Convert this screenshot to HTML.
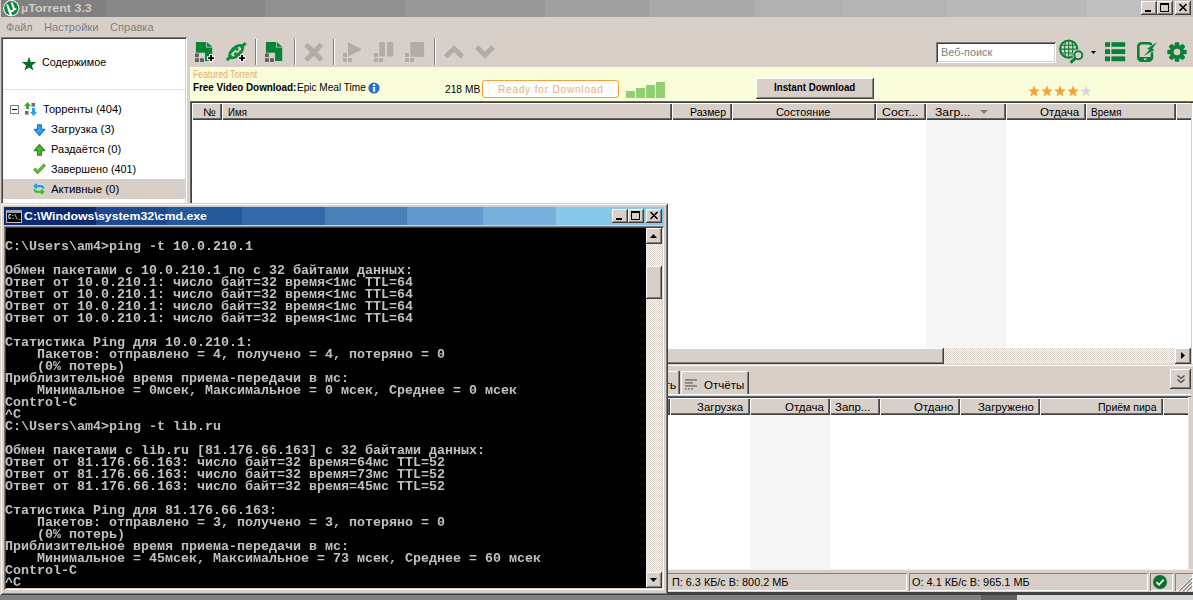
<!DOCTYPE html>
<html lang="ru"><head><meta charset="utf-8"><title>µTorrent 3.3</title>
<style>
*{box-sizing:border-box;margin:0;padding:0}
html,body{width:1193px;height:600px;overflow:hidden;background:#d8d0c8;}
body{position:relative;font-family:"Liberation Sans",sans-serif;font-size:11px;color:#000;line-height:13px}
.a{position:absolute}
.t{position:absolute;white-space:nowrap;line-height:13px;height:13px;transform-origin:0 0}
.face{background:#d8d0c8}
.btn{position:absolute;background:#d8d0c8;box-shadow:inset -1px -1px #404040,inset 1px 1px #fff,inset -2px -2px #808080}
.sunk{position:absolute;box-shadow:inset 1px 1px #808080,inset -1px -1px #fff,inset 2px 2px #404040,inset -2px -2px #d8d0c8}
.pane{position:absolute;box-shadow:inset 1px 1px #808080,inset -1px -1px #fff}
.hl{box-shadow:inset 1px 1px #fff,inset 0 -1px #404040,inset 0 -2px #686868 !important}
.hc{position:absolute;background:#d8d0c8;box-shadow:inset 1px 1px #fff,inset -1px -1px #404040,inset -2px -2px #686868;white-space:nowrap;overflow:hidden;line-height:13px;padding-top:2px}
.dith{background-image:conic-gradient(#fff 25%,#d8d0c8 0 50%,#fff 0 75%,#d8d0c8 0);background-size:2px 2px}
.sep{position:absolute;top:39px;width:2px;height:26px;border-left:1px solid #808080;border-right:1px solid #fff}
svg{position:absolute;overflow:visible}
#cmdtxt{position:absolute;left:5px;top:229px;width:640px;height:359px;font-family:"Liberation Mono",monospace;font-weight:bold;font-size:13.333px;line-height:12px;color:#c0c0c0;white-space:pre;overflow:hidden;will-change:transform}
</style></head><body>

<!-- ===== uTorrent window ===== -->
<div class="a" style="left:1px;top:0;width:1192px;height:17px;background:linear-gradient(90deg,rgb(128,128,128) 0px,rgb(128,128,128) 105px,rgb(136,136,136) 105px,rgb(136,136,136) 264px,rgb(144,144,144) 264px,rgb(144,144,144) 404px,rgb(152,152,152) 404px,rgb(152,152,152) 544px,rgb(160,160,160) 544px,rgb(160,160,160) 649px,rgb(169,169,169) 649px,rgb(169,169,169) 754px,rgb(176,176,176) 754px,rgb(176,176,176) 841px,rgb(180,180,180) 841px,rgb(180,180,180) 946px,rgb(185,185,185) 946px,rgb(185,185,185) 1086px,rgb(192,192,192) 1086px,rgb(192,192,192) 1191px)"></div>
<svg style="left:3px;top:0" width="17" height="17" viewBox="0 0 17 17"><circle cx="8.3" cy="8.2" r="8.1" fill="#fff"/><circle cx="8.3" cy="8.2" r="7.1" fill="#0a8a3a"/><g transform="rotate(-20 8.3 8.2)" fill="none" stroke="#fff"><path d="M5.6 3.2 V9 Q5.6 11.2 8 11.2 Q10.6 11.2 10.6 8.6 V3" stroke-width="2"/><path d="M5.6 8 V15.2" stroke-width="2.2"/><path d="M10.6 8.6 Q10.8 10.8 12.8 10.4" stroke-width="1.6"/></g></svg>
<div class="t f" style="left:20.6px;top:2px;font-size:11px;color:#d0ccc4;font-weight:bold;transform:scaleX(1.1351);">µTorrent 3.3</div>
<!-- title buttons -->
<div class="btn" style="left:1141px;top:1px;width:16px;height:14px"><div class="a" style="left:4px;top:9px;width:6px;height:2px;background:#000"></div></div>
<div class="btn" style="left:1157px;top:1px;width:16px;height:14px"><div class="a" style="left:3px;top:2px;width:9px;height:9px;border:1px solid #000;border-top-width:2px"></div></div>
<div class="btn" style="left:1175px;top:1px;width:16px;height:14px"><svg style="left:4px;top:3px" width="8" height="7" viewBox="0 0 8 7"><path d="M0.5 0 L7.5 7 M7.5 0 L0.5 7" stroke="#000" stroke-width="1.6"/></svg></div>

<!-- menu -->
<div class="t f" style="left:6.3px;top:21px;font-size:11px;color:#808080;transform:scaleX(0.9761);">Файл</div>
<div class="t f" style="left:44.0px;top:21px;font-size:11px;color:#808080;transform:scaleX(1.0086);">Настройки</div>
<div class="t f" style="left:110.2px;top:21px;font-size:11px;color:#808080;transform:scaleX(1.0103);">Справка</div>

<!-- sidebar -->
<div class="sunk" style="left:1px;top:37px;width:186px;height:180px;background:#fff"></div>
<svg style="left:21.2px;top:55.6px" width="16" height="16" viewBox="0 0 15 15"><path d="M7.5 0.8 L9.2 5.6 L14.3 5.7 L10.2 8.8 L11.7 13.7 L7.5 10.8 L3.3 13.7 L4.8 8.8 L0.7 5.7 L5.8 5.6 Z" fill="#0b6b2e"/></svg>
<div class="t f" style="left:42.3px;top:56px;font-size:11px;color:#000;transform:scaleX(0.9744);">Содержимое</div>
<div class="a" style="left:3px;top:89px;width:182px;height:1px;background:#e0e0e0"></div>
<div class="a" style="left:3px;top:179px;width:182px;height:20px;background:#d8d0c8"></div>
<!-- tree -->
<div class="a" style="left:10px;top:105px;width:9px;height:9px;border:1px solid #808080;background:#fff"><div class="a" style="left:1px;top:3px;width:5px;height:1px;background:#000"></div></div>
<svg style="left:24px;top:102px" width="13" height="14" viewBox="0 0 13 14">
 <path d="M3.5 0 L7 4 L5 4 L5 7 L2 7 L2 4 L0 4 Z" fill="#3aa83a"/>
 <rect x="7.5" y="1" width="3.6" height="3.6" fill="#707070"/><rect x="1" y="9" width="3.6" height="3.6" fill="#707070"/>
 <path d="M9.5 14 L6 10 L8 10 L8 6 L11 6 L11 10 L13 10 Z" fill="#2a9df4"/>
</svg>
<div class="t f" style="left:42.6px;top:103px;font-size:11px;color:#000;transform:scaleX(1.0090);">Торренты (404)</div>
<svg style="left:33px;top:124px" width="13" height="12" viewBox="0 0 13 12"><path d="M4.6 0.8 L8.4 0.8 L8.4 5.4 L11.8 5.4 L6.5 11.2 L1.2 5.4 L4.6 5.4 Z" fill="#38a4f4" stroke="#1878d0" stroke-width="1.3" stroke-linejoin="round"/></svg>
<div class="t f" style="left:51.2px;top:123px;font-size:11px;color:#000;transform:scaleX(1.0429);">Загрузка (3)</div>
<svg style="left:33px;top:144px" width="13" height="12" viewBox="0 0 13 12"><path d="M4.6 11.2 L8.4 11.2 L8.4 6.6 L11.8 6.6 L6.5 0.8 L1.2 6.6 L4.6 6.6 Z" fill="#50b830" stroke="#2c8a18" stroke-width="1.3" stroke-linejoin="round"/></svg>
<div class="t f" style="left:51.2px;top:143px;font-size:11px;color:#000;transform:scaleX(1.0130);">Раздаётся (0)</div>
<svg style="left:33px;top:163px" width="13" height="11" viewBox="0 0 13 11"><path d="M1.2 5.6 L4.6 9 L11.8 1.6" fill="none" stroke="#3c9a20" stroke-width="3"/><path d="M1.4 5.6 L4.6 8.6 L11.6 1.8" fill="none" stroke="#6cc83c" stroke-width="1.4"/></svg>
<div class="t f" style="left:51.2px;top:163px;font-size:11px;color:#000;transform:scaleX(0.9839);">Завершено (401)</div>
<svg style="left:32px;top:182px" width="14" height="14" viewBox="0 0 14 14">
 <path d="M5.2 0.6 L0.8 4.2 L5.2 7.8 L5.2 5.6 L9 5.6 Q10.6 5.8 10.8 7.6 L12.6 7.6 Q12.8 3.2 9 2.8 L5.2 2.8 Z" fill="#2a9df4" stroke="#fff" stroke-width="0.9" paint-order="stroke"/>
 <path d="M8.8 13.4 L13.2 9.8 L8.8 6.2 L8.8 8.4 L5 8.4 Q3.4 8.2 3.2 6.6 L1.4 6.6 Q1.2 10.8 5 11.2 L8.8 11.2 Z" fill="#4cb830" stroke="#fff" stroke-width="0.9" paint-order="stroke"/>
</svg>
<div class="t f" style="left:51.2px;top:183px;font-size:11px;color:#000;transform:scaleX(1.0348);">Активные (0)</div>

<!-- toolbar icons -->
<svg style="left:195px;top:42px" width="20" height="20" viewBox="0 0 20 20">
 <path d="M0.9 0 L10.9 0 L10.9 5.4 L17.2 5.4 L17.2 19.1 L10.1 19.1 L10.1 10.8 L0.9 10.8 Z" fill="#068434"/><path d="M11.7 0 L17.2 4.8 L11.7 4.8 Z" fill="#068434"/>
 <rect x="0" y="11.4" width="3.9" height="3.8" fill="#606060"/><rect x="0" y="16.2" width="3.9" height="3.8" fill="#606060"/><rect x="5" y="16.2" width="3.9" height="3.8" fill="#606060"/>
 <path d="M16 12.2 V20 M12.1 16.1 H19.9" stroke="#fff" stroke-width="3.8"/><path d="M16 13.1 V19.1 M13 16.1 H19" stroke="#000" stroke-width="1.9"/>
</svg>
<svg style="left:226px;top:42px" width="20" height="20" viewBox="0 0 20 20">
 <g transform="rotate(-42 10.2 9.6)">
  <rect x="-2.6" y="8.2" width="25.6" height="2.9" fill="#0a8a3c"/>
  <ellipse cx="10.2" cy="9.6" rx="9.4" ry="5.6" fill="#0a8a3c"/>
  <rect x="4.2" y="7.7" width="12" height="3.8" rx="1.4" fill="#d8d0c8"/>
  <rect x="11" y="7.4" width="2.6" height="2.3" fill="#0a8a3c"/><rect x="6.8" y="9.5" width="2.6" height="2.3" fill="#0a8a3c"/>
 </g>
 <path d="M16 12.2 V20 M12.1 16.1 H19.9" stroke="#fff" stroke-width="3.8"/><path d="M16 13.1 V19.1 M13 16.1 H19" stroke="#000" stroke-width="1.9"/>
</svg>
<div class="sep" style="left:255px"></div>
<svg style="left:265px;top:42px" width="20" height="20" viewBox="0 0 20 20">
 <path d="M0.9 0 L10.9 0 L10.9 5.4 L17.2 5.4 L17.2 19.1 L10.1 19.1 L10.1 10.8 L0.9 10.8 Z" fill="#068434"/><path d="M11.7 0 L17.2 4.8 L11.7 4.8 Z" fill="#068434"/>
 <rect x="0" y="11.4" width="3.9" height="3.8" fill="#606060"/><rect x="0" y="16.2" width="3.9" height="3.8" fill="#606060"/><rect x="5" y="16.2" width="3.9" height="3.8" fill="#606060"/>
</svg>
<div class="sep" style="left:294px"></div>
<svg style="left:304px;top:42px" width="20" height="20" viewBox="0 0 20 20"><path d="M2 2.5 L17.5 18 M17.5 2.5 L2 18" stroke="#b0aca8" stroke-width="5.2"/></svg>
<div class="sep" style="left:333px"></div>
<svg style="left:343px;top:42px" width="20" height="20" viewBox="0 0 20 20" fill="#b0aca8">
 <path d="M5 0 L19 7.5 L5 14.5 Z"/><rect x="0" y="11" width="4" height="4"/><rect x="0" y="16" width="4" height="4"/><rect x="5" y="16" width="4" height="4"/></svg>
<svg style="left:374px;top:42px" width="20" height="20" viewBox="0 0 20 20" fill="#b0aca8">
 <rect x="5.3" y="0" width="5.6" height="14.5"/><rect x="13" y="0" width="6.2" height="14.5"/><rect x="0" y="11" width="4" height="4"/><rect x="0" y="16" width="4" height="4"/><rect x="5" y="16" width="4" height="4"/></svg>
<svg style="left:405px;top:42px" width="20" height="20" viewBox="0 0 20 20" fill="#b0aca8">
 <rect x="5.3" y="0" width="13.8" height="14.8"/><rect x="0" y="11" width="4" height="4"/><rect x="0" y="16" width="4" height="4"/><rect x="5" y="16" width="4" height="4"/></svg>
<div class="sep" style="left:434px"></div>
<svg style="left:444px;top:45px" width="20" height="14" viewBox="0 0 20 14"><path d="M10 0 L20 10 L16.5 13.6 L10 7 L3.5 13.6 L0 10 Z" fill="#b0aca8"/></svg>
<svg style="left:475px;top:45px" width="20" height="14" viewBox="0 0 20 14"><path d="M10 13.8 L20 3.8 L16.5 0.2 L10 6.8 L3.5 0.2 L0 3.8 Z" fill="#b0aca8"/></svg>

<!-- search -->
<div class="sunk" style="left:936px;top:42px;width:120px;height:21px;background:#fff"></div>
<div class="t f" style="left:941.2px;top:46px;font-size:11px;color:#808080;transform:scaleX(0.9879);">Веб-поиск</div>
<svg style="left:1058px;top:39px" width="26" height="26" viewBox="0 0 26 26" fill="none" stroke="#0a8038">
 <circle cx="10.7" cy="10.1" r="8.6" stroke-width="2.2"/>
 <path d="M2.5 10.1 H19 M3.6 6.2 H17.8 M3.6 14 H17.8 M10.7 2 V18.2 M7.4 2.6 Q5.6 10.1 7.4 17.6 M14 2.6 Q15.8 10.1 14 17.6" stroke-width="1.15"/>
 <circle cx="20.3" cy="16.2" r="4" stroke="#d8d0c8" stroke-width="3.8" fill="#d8d0c8"/><path d="M17.3 19.4 L13.4 22.9" stroke="#d8d0c8" stroke-width="4.2"/>
 <circle cx="20.3" cy="16.2" r="4" stroke-width="1.9"/><path d="M17.6 19.1 L12.6 23.6" stroke-width="3"/>
</svg>
<svg style="left:1091px;top:51px" width="5" height="3" viewBox="0 0 5 3"><path d="M0 0 H5 L2.5 3 Z" fill="#000"/></svg>
<svg style="left:1105px;top:42px" width="20" height="20" viewBox="0 0 20 20" fill="#0a8038">
 <rect x="0" y="0.2" width="5" height="4.6"/><rect x="6.4" y="0.2" width="13.8" height="4.6"/>
 <rect x="0" y="7.2" width="5" height="4.8"/><rect x="6.4" y="7.2" width="13.8" height="4.8"/>
 <rect x="0" y="14.4" width="5" height="4.8"/><rect x="6.4" y="14.4" width="13.8" height="4.8"/></svg>
<svg style="left:1130px;top:36px" width="35" height="30" viewBox="0 0 35 30">
 <rect x="8.3" y="7.2" width="13.6" height="17.6" rx="3.4" fill="none" stroke="#0a8038" stroke-width="2.6"/>
 <path d="M8.3 20.9 H21.9 V22.5 Q21.9 24.8 19 24.8 H11.2 Q8.3 24.8 8.3 22.5 Z" fill="#0a8038"/><rect x="13.9" y="22.6" width="2.4" height="1.2" fill="#fff"/>
 <path d="M27.3 5.9 L20.6 10.6 L17.2 12.4 L19.4 13.8 L13.6 19.9 L21 15.8 L24.2 14.6 L22.4 12.4 Z" fill="#0a8038" stroke="#d8d0c8" stroke-width="1.4" paint-order="stroke"/>
</svg>
<svg style="left:1167px;top:41.5px" width="20" height="20" viewBox="-10.5 -10.5 21 21"><g fill="#0a8038"><circle r="7.4"/><rect x="-2.4" y="-10.2" width="4.8" height="5" rx="1" transform="rotate(0)"/><rect x="-2.4" y="-10.2" width="4.8" height="5" rx="1" transform="rotate(45)"/><rect x="-2.4" y="-10.2" width="4.8" height="5" rx="1" transform="rotate(90)"/><rect x="-2.4" y="-10.2" width="4.8" height="5" rx="1" transform="rotate(135)"/><rect x="-2.4" y="-10.2" width="4.8" height="5" rx="1" transform="rotate(180)"/><rect x="-2.4" y="-10.2" width="4.8" height="5" rx="1" transform="rotate(225)"/><rect x="-2.4" y="-10.2" width="4.8" height="5" rx="1" transform="rotate(270)"/><rect x="-2.4" y="-10.2" width="4.8" height="5" rx="1" transform="rotate(315)"/></g><circle r="3.5" fill="#d8d0c8"/></svg>

<!-- featured bar -->
<div class="a" style="left:190px;top:67px;width:1003px;height:34px;background:#fafdda"></div>
<div class="t f" style="left:193.4px;top:68px;font-size:10px;color:#e8aa6e;transform:scaleX(0.8705);">Featured Torrent</div>
<div class="t f" style="left:193.1px;top:81px;font-size:10px;color:#000;font-weight:bold;transform:scaleX(0.9862);">Free Video Download:</div>
<div class="t f" style="left:296.6px;top:81px;font-size:10px;color:#000;transform:scaleX(1.0064);">Epic Meal Time</div>
<svg style="left:368px;top:82px" width="12" height="12" viewBox="0 0 12 12"><circle cx="6" cy="6" r="5.6" fill="#2a6fd0"/><rect x="5" y="5" width="2.2" height="4.6" fill="#fff"/><rect x="5" y="2.2" width="2.2" height="1.9" fill="#fff"/></svg>
<div class="t f" style="left:444.9px;top:83px;font-size:10px;color:#000;transform:scaleX(1.0212);">218 MB</div>
<div class="a" style="left:482px;top:80px;width:137px;height:18px;border:1px solid #f0a040;border-radius:3px;background:#fff"></div>
<div class="t f" style="left:498.1px;top:83px;font-size:10.5px;color:#e8b070;transform:scaleX(0.9640);letter-spacing:0.8px;">Ready for Download</div>
<div class="a" style="left:626px;top:91px;width:9px;height:7px;background:#90d070"></div>
<div class="a" style="left:636px;top:88px;width:9px;height:10px;background:#90d070"></div>
<div class="a" style="left:646px;top:85px;width:9px;height:13px;background:#90d070"></div>
<div class="a" style="left:656px;top:82px;width:9px;height:16px;background:#90d070"></div>
<div class="btn" style="left:756px;top:78px;width:118px;height:21px"></div>
<div class="t f" style="left:773.6px;top:81px;font-size:10px;color:#000;font-weight:bold;transform:scaleX(0.9755);">Instant Download</div>
<svg style="left:1028px;top:85px" width="66" height="13" viewBox="0 0 66 13"><path transform="translate(0 0)" d="M6 0.3 L7.5 4.4 L11.8 4.5 L8.4 7.2 L9.6 11.5 L6 9 L2.4 11.5 L3.6 7.2 L0.2 4.5 L4.5 4.4 Z" fill="#f7a030"/><path transform="translate(13 0)" d="M6 0.3 L7.5 4.4 L11.8 4.5 L8.4 7.2 L9.6 11.5 L6 9 L2.4 11.5 L3.6 7.2 L0.2 4.5 L4.5 4.4 Z" fill="#f7a030"/><path transform="translate(26 0)" d="M6 0.3 L7.5 4.4 L11.8 4.5 L8.4 7.2 L9.6 11.5 L6 9 L2.4 11.5 L3.6 7.2 L0.2 4.5 L4.5 4.4 Z" fill="#f7a030"/><path transform="translate(39 0)" d="M6 0.3 L7.5 4.4 L11.8 4.5 L8.4 7.2 L9.6 11.5 L6 9 L2.4 11.5 L3.6 7.2 L0.2 4.5 L4.5 4.4 Z" fill="#f7a030"/><path transform="translate(52 0)" d="M6 0.3 L7.5 4.4 L11.8 4.5 L8.4 7.2 L9.6 11.5 L6 9 L2.4 11.5 L3.6 7.2 L0.2 4.5 L4.5 4.4 Z" fill="#d8d8d8"/></svg>

<!-- main list -->
<div class="a" style="left:190px;top:101px;width:1003px;height:265px;background:#fff;box-shadow:inset 1px 1px #686868,inset 2px 2px #404040"></div>
<div class="a" style="left:192px;top:103px;width:999px;height:17px;background:#d8d0c8"></div>
<div class="hc" style="left:192px;top:103px;width:30px;height:17px"></div>
<div class="hc" style="left:222px;top:103px;width:450px;height:17px"></div>
<div class="hc" style="left:672px;top:103px;width:60px;height:17px"></div>
<div class="hc" style="left:732px;top:103px;width:144px;height:17px"></div>
<div class="hc" style="left:876px;top:103px;width:50px;height:17px"></div>
<div class="hc" style="left:926px;top:103px;width:80px;height:17px"></div>
<div class="hc" style="left:1006px;top:103px;width:80px;height:17px"></div>
<div class="hc" style="left:1086px;top:103px;width:90px;height:17px"></div>
<div class="hc hl" style="left:1176px;top:103px;width:15px;height:17px"></div>
<div class="t f" style="left:203.3px;top:106px;font-size:11px;color:#000;transform:scaleX(1.0921);">№</div><div class="t f" style="left:227.5px;top:106px;font-size:11px;color:#000;transform:scaleX(0.8816);">Имя</div><div class="t f" style="left:689.8px;top:106px;font-size:11px;color:#000;transform:scaleX(0.9521);">Размер</div><div class="t f" style="left:776.1px;top:106px;font-size:11px;color:#000;transform:scaleX(0.9892);">Состояние</div>
<div class="t f" style="left:881.9px;top:106px;font-size:11px;color:#000;transform:scaleX(1.1179);">Сост...</div><div class="t f" style="left:934.7px;top:106px;font-size:11px;color:#000;transform:scaleX(1.1072);">Загр...</div><div class="t f" style="left:1040.4px;top:106px;font-size:11px;color:#000;transform:scaleX(1.0515);">Отдача</div><div class="t f" style="left:1091.2px;top:106px;font-size:11px;color:#000;transform:scaleX(0.9186);">Время</div>
<svg style="left:980px;top:110px" width="8" height="4" viewBox="0 0 8 4"><path d="M0 0 H8 L4 4 Z" fill="#808080"/></svg>
<div class="a" style="left:926px;top:120px;width:80px;height:228px;background:#f6f6f6"></div>
<div class="a" style="left:1191px;top:103px;width:2px;height:262px;background:#d8d0c8;border-right:1px solid #fff"></div>
<!-- h scrollbar -->
<div class="a dith" style="left:192px;top:348px;width:999px;height:16px"></div>
<div class="btn" style="left:600px;top:348px;width:344px;height:16px"></div>
<div class="btn" style="left:1175px;top:348px;width:16px;height:16px"><svg style="left:6px;top:4px" width="4" height="7" viewBox="0 0 4 7"><path d="M0 0 L4 3.5 L0 7 Z" fill="#000"/></svg></div>
<div class="a" style="left:190px;top:364px;width:1003px;height:2px;background:#d8d0c8;border-bottom:1px solid #fff"></div>

<!-- tabs area -->
<div class="a" style="left:600px;top:371px;width:80px;height:23px;background:#d8d0c8;box-shadow:inset -1px 0 #404040,inset -2px 0 #808080,inset 0 1px #fff"></div>
<div class="t f" style="left:664.1px;top:379px;font-size:11px;color:#000;transform:scaleX(1.1409);">ть</div>
<div class="a" style="left:681px;top:371px;width:68px;height:23px;background:#d8d0c8;box-shadow:inset 1px 1px #fff,inset -1px 0 #404040,inset -2px 0 #808080;border-radius:2px 2px 0 0"></div>
<svg style="left:685px;top:379px" width="12" height="11" viewBox="0 0 12 11" fill="#868686"><rect x="0" y="0" width="12" height="1.8"/><rect x="0" y="3" width="8" height="1.8"/><rect x="0" y="6" width="12" height="1.8"/><rect x="0" y="9" width="2" height="1.7"/><rect x="3" y="9" width="2" height="1.7"/><rect x="6" y="9" width="2" height="1.7"/></svg>
<div class="t f" style="left:704.0px;top:379px;font-size:11px;color:#000;transform:scaleX(1.0471);">Отчёты</div>
<div class="btn" style="left:1170px;top:369px;width:21px;height:20px"><svg style="left:7px;top:6px" width="8" height="9" viewBox="0 0 8 9"><path d="M0.5 0.5 L4 3.5 L7.5 0.5 M0.5 4.5 L4 7.5 L7.5 4.5" fill="none" stroke="#404040" stroke-width="1.1"/></svg></div>
<div class="a" style="left:600px;top:394px;width:591px;height:1px;background:#fff"></div>

<!-- bottom list -->
<div class="a" style="left:600px;top:396px;width:591px;height:175px;background:#fff;box-shadow:inset 0 1px #686868,inset 0 2px #404040"></div>
<div class="a" style="left:600px;top:398px;width:588px;height:17px;background:#d8d0c8"></div>
<div class="hc" style="left:600px;top:398px;width:70px;height:17px"></div>
<div class="hc" style="left:670px;top:398px;width:80px;height:17px"></div>
<div class="hc" style="left:750px;top:398px;width:80px;height:17px"></div>
<div class="hc" style="left:830px;top:398px;width:50px;height:17px"></div>
<div class="hc" style="left:880px;top:398px;width:80px;height:17px"></div>
<div class="hc" style="left:960px;top:398px;width:80px;height:17px"></div>
<div class="hc" style="left:1040px;top:398px;width:123px;height:17px"></div>
<div class="hc hl" style="left:1163px;top:398px;width:25px;height:17px"></div>
<div class="t f" style="left:697.3px;top:401px;font-size:11px;color:#000;transform:scaleX(1.0363);">Загрузка</div><div class="t f" style="left:784.5px;top:401px;font-size:11px;color:#000;transform:scaleX(1.0408);">Отдача</div><div class="t f" style="left:835.3px;top:401px;font-size:11px;color:#000;transform:scaleX(1.0407);">Запр...</div><div class="t f" style="left:914.3px;top:401px;font-size:11px;color:#000;transform:scaleX(1.0377);">Отдано</div>
<div class="t f" style="left:978.0px;top:401px;font-size:11px;color:#000;transform:scaleX(1.0340);">Загружено</div><div class="t f" style="left:1097.9px;top:401px;font-size:11px;color:#000;transform:scaleX(0.9551);">Приём пира</div>
<div class="a" style="left:750px;top:415px;width:80px;height:154px;background:#f6f6f6"></div>
<div class="a" style="left:1188px;top:397px;width:5px;height:175px;background:#d8d0c8;border-left:1px solid #e8e8e8"></div>
<div class="a" style="left:600px;top:569px;width:593px;height:4px;background:#d8d0c8;border-top:1px solid #f0f0f0"></div>

<!-- status bar -->
<div class="pane" style="left:600px;top:573px;width:307px;height:18px"></div>
<div class="t f" style="left:671.6px;top:576px;font-size:11px;color:#000;transform:scaleX(0.9862);">П: 6.3 КБ/с В: 800.2 МБ</div>
<div class="pane" style="left:909px;top:573px;width:239px;height:18px"></div>
<div class="t f" style="left:911.5px;top:576px;font-size:11px;color:#000;transform:scaleX(0.9918);">О: 4.1 КБ/с В: 965.1 МБ</div>
<div class="pane" style="left:1150px;top:573px;width:23px;height:18px"></div>
<svg style="left:1153px;top:575px" width="14" height="14" viewBox="0 0 14 14"><circle cx="7" cy="7" r="7" fill="#0a7030"/><path d="M3.4 7.2 L6 9.8 L10.6 4.6" fill="none" stroke="#fff" stroke-width="1.8"/></svg>
<div class="pane" style="left:1175px;top:573px;width:18px;height:18px"></div>
<svg style="left:1178px;top:577px" width="14" height="14" viewBox="0 0 14 14"><path d="M14 1 L1 14 M14 5 L5 14 M14 9 L9 14" stroke="#808080" stroke-width="1.6"/><path d="M14 0 L0 14 M14 4 L4 14 M14 8 L8 14" stroke="#fff" stroke-width="1"/></svg>

<!-- bottom edge -->
<div class="a" style="left:0;top:592px;width:1193px;height:3px;background:#404040"></div>
<div class="a" style="left:0;top:595px;width:981px;height:5px;background:#808080"></div>
<div class="a" style="left:981px;top:595px;width:36px;height:5px;background:#606060"></div>
<div class="a" style="left:1017px;top:595px;width:176px;height:5px;background:#d8d8d8"></div>

<!-- ===== cmd window ===== -->
<div class="a" style="left:0;top:203px;width:668px;height:392px;background:#d8d0c8;box-shadow:inset 1px 1px #d8d0c8,inset -1px -1px #404040,inset 2px 2px #fff,inset -2px -2px #808080"></div>
<div class="a" style="left:4px;top:207px;width:660px;height:18px;background:linear-gradient(90deg,#0b2a72 0px,#0b2a72 92px,#1c4890 92px,#1c4890 163px,#26589c 163px,#26589c 238px,#3468a8 238px,#3468a8 321px,#4a80b8 321px,#4a80b8 403px,#6298cc 403px,#6298cc 479px,#78b0dc 479px,#78b0dc 552px,#88c8e8 552px,#88c8e8 660px)"></div>
<div class="a" style="left:6px;top:210px;width:16px;height:13px;background:#000;border:1px solid #c0c0c0;border-top:3px solid #a0a0a0"></div>
<div class="t" style="left:8px;top:213px;font-family:'Liberation Mono',monospace;font-size:8px;line-height:8px;height:8px;color:#fff;font-weight:bold;transform:scaleX(0.66)">C:\_</div>
<div class="t f" style="left:23.9px;top:210px;font-size:11px;color:#fff;font-weight:bold;transform:scaleX(1.1217);">C:\Windows\system32\cmd.exe</div>
<div class="btn" style="left:612px;top:209px;width:16px;height:14px"><div class="a" style="left:4px;top:9px;width:6px;height:2px;background:#000"></div></div>
<div class="btn" style="left:628px;top:209px;width:16px;height:14px"><div class="a" style="left:3px;top:2px;width:9px;height:9px;border:1px solid #000;border-top-width:2px"></div></div>
<div class="btn" style="left:646px;top:209px;width:16px;height:14px"><svg style="left:4px;top:3px" width="8" height="7" viewBox="0 0 8 7"><path d="M0.5 0 L7.5 7 M7.5 0 L0.5 7" stroke="#000" stroke-width="1.6"/></svg></div>
<div class="sunk" style="left:4px;top:226px;width:660px;height:364px;background:#000"></div>
<div class="a dith" style="left:646px;top:228px;width:16px;height:360px"></div>
<div class="btn" style="left:646px;top:228px;width:16px;height:16px"><svg style="left:4px;top:6px" width="7" height="4" viewBox="0 0 7 4"><path d="M0 4 H7 L3.5 0 Z" fill="#000"/></svg></div>
<div class="btn" style="left:646px;top:266px;width:16px;height:33px"></div>
<div class="btn" style="left:646px;top:572px;width:16px;height:16px"><svg style="left:4px;top:6px" width="7" height="4" viewBox="0 0 7 4"><path d="M0 0 H7 L3.5 4 Z" fill="#000"/></svg></div>
<pre id="cmdtxt">

C:\Users\am4&gt;ping -t 10.0.210.1

Обмен пакетами с 10.0.210.1 по с 32 байтами данных:
Ответ от 10.0.210.1: число байт=32 время&lt;1мс TTL=64
Ответ от 10.0.210.1: число байт=32 время&lt;1мс TTL=64
Ответ от 10.0.210.1: число байт=32 время&lt;1мс TTL=64
Ответ от 10.0.210.1: число байт=32 время&lt;1мс TTL=64

Статистика Ping для 10.0.210.1:
    Пакетов: отправлено = 4, получено = 4, потеряно = 0
    (0% потерь)
Приблизительное время приема-передачи в мс:
    Минимальное = 0мсек, Максимальное = 0 мсек, Среднее = 0 мсек
Control-C
^C
C:\Users\am4&gt;ping -t lib.ru

Обмен пакетами с lib.ru [81.176.66.163] с 32 байтами данных:
Ответ от 81.176.66.163: число байт=32 время=64мс TTL=52
Ответ от 81.176.66.163: число байт=32 время=73мс TTL=52
Ответ от 81.176.66.163: число байт=32 время=45мс TTL=52

Статистика Ping для 81.176.66.163:
    Пакетов: отправлено = 3, получено = 3, потеряно = 0
    (0% потерь)
Приблизительное время приема-передачи в мс:
    Минимальное = 45мсек, Максимальное = 73 мсек, Среднее = 60 мсек
Control-C
^C</pre>
</body></html>
